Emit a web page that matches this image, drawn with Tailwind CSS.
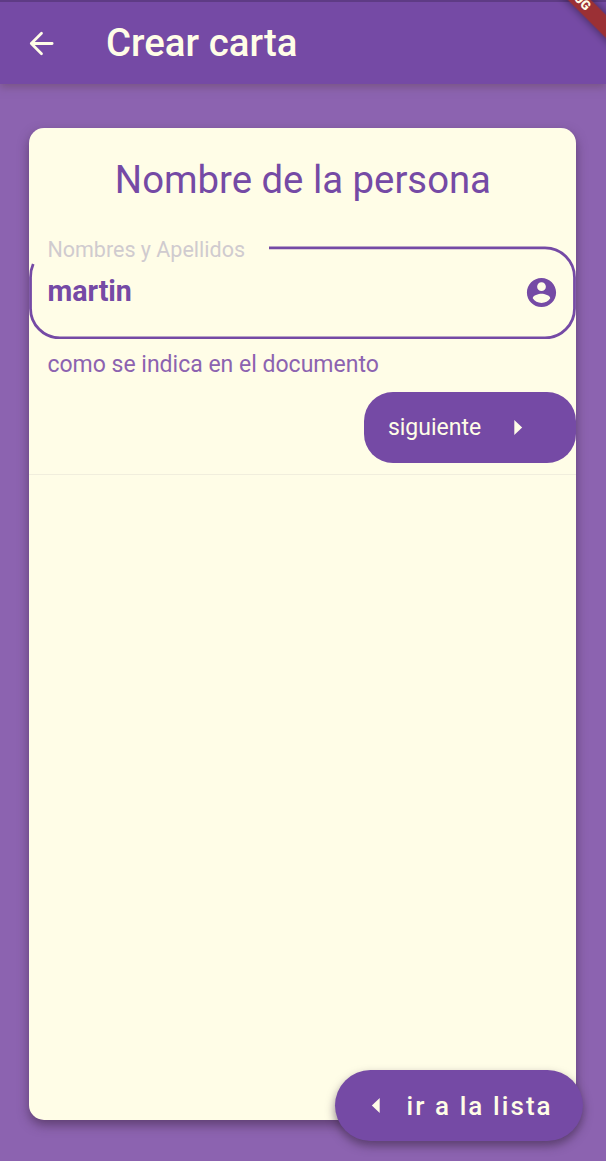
<!DOCTYPE html>
<html lang="es">
<head>
<meta charset="utf-8">
<title>Crear carta</title>
<script src="https://cdn.jsdelivr.net/npm/@tailwindcss/browser@4"></script>
</head>
<body class="relative h-[1161px] w-[606px] overflow-hidden bg-[#8c63b0] font-['Roboto',sans-serif]">
<div class="flex h-full flex-col">
  <header class="relative z-10 flex h-[84px] shrink-0 items-center border-t-2 border-[#5e3b85] bg-[#754aa5] pl-[24px] text-[#fffde7] shadow-[0_3px_8px_rgba(100,70,90,0.5)]">
    <svg class="size-[35px] shrink-0" viewBox="0 0 24 24" fill="none" stroke="currentColor" stroke-width="1.9" stroke-linecap="round" stroke-linejoin="round"><path d="M19.300 12H5M12 5l-7 7 7 7"/></svg>
    <h1 class="ml-[47px] text-[38.4px] leading-[44px] font-medium whitespace-nowrap">Crear carta</h1>
  </header>

  <main class="mr-[29.6px] ml-[29.4px] mt-[44px] flex h-[992px] shrink-0 flex-col rounded-[15px] bg-[#fffde7] shadow-[0_5px_11px_rgba(70,45,80,0.65)]">
    <h2 class="mt-[29px] text-center text-[38.3px] leading-[46px] whitespace-nowrap text-[#754aa5]">Nombre de la persona</h2>

    <div class="relative mt-[43px] h-[93px] pl-[18px]">
      <svg class="absolute inset-0 h-[93px] w-[547px]" viewBox="0 0 547 93" fill="none" stroke="#754aa5" stroke-width="2.8"><path d="M240 1.900H516A29.500 29.500 0 0 1 545.500 31.400V62.400A29.500 29.500 0 0 1 516 91.900H31A29.500 29.500 0 0 1 1.500 62.400V31.400Q1.500 24 4.200 18"/></svg>
      <div class="relative -top-[10px] text-[21.5px] leading-[28px] whitespace-nowrap text-[#d0cbcf]">Nombres y Apellidos</div>
      <div class="flex items-center justify-between pr-[17.400px]">
        <span class="text-[28.6px] leading-[35px] font-bold text-[#754aa5]">martin</span>
        <svg class="relative top-[1px] size-[35px]" viewBox="0 0 24 24" fill="#754aa5"><path d="M12 2C6.480 2 2 6.480 2 12s4.480 10 10 10 10-4.480 10-10S17.520 2 12 2zm0 3c1.660 0 3 1.340 3 3s-1.340 3-3 3-3-1.340-3-3 1.340-3 3-3zm0 14.200c-2.500 0-4.710-1.280-6-3.220.03-1.990 4-3.080 6-3.080 1.990 0 5.970 1.090 6 3.080-1.290 1.940-3.500 3.220-6 3.220z"/></svg>
      </div>
    </div>
    <p class="mt-[12px] pl-[18px] text-[23px] leading-[27px] whitespace-nowrap text-[#8c63b0]">como se indica en el documento</p>

    <button class="mt-[14px] flex h-[70.5px] w-[212.5px] items-center self-end rounded-[29px] bg-[#754aa5] pl-[24px] text-[#fffde7]">
      <span class="text-[23px] leading-[27px]">siguiente</span>
      <svg class="ml-[18.5px] size-[35px]" viewBox="0 0 24 24" fill="currentColor"><path d="M9.800 17.200l5.400-5.200-5.400-5.200z"/></svg>
    </button>
    <div class="mt-[11px] h-[1.5px] bg-[#f1eedd]"></div>
  </main>
</div>

<button class="absolute top-[1070px] left-[335px] z-20 flex h-[71px] w-[248px] items-center rounded-full bg-[#754aa5] pl-[23.5px] text-[#fffde7] shadow-[0_5px_10px_rgba(60,40,70,0.6)]">
  <svg class="size-[35px] shrink-0" viewBox="0 0 24 24" fill="currentColor"><path d="M14.200 6.800L8.800 12l5.400 5.200z"/></svg>
  <span class="ml-[13px] text-[26px] leading-[30px] font-medium tracking-[2.080px] whitespace-nowrap">ir a la lista</span>
</button>

<svg class="absolute top-0 right-0 z-30 size-[60px]" viewBox="0 0 60 60">
  <g transform="translate(33.500 0) rotate(45)">
    <rect x="-60" y="-8.200" width="130" height="16.400" fill="#9b3035" class="drop-shadow-[0_0_5px_rgba(0,0,0,0.5)]"/>
    <text x="12.200" y="3.700" text-anchor="end" font-family="Roboto" font-weight="900" font-size="13" fill="#fffde7">DEBUG</text>
  </g>
</svg>
</body>
</html>
